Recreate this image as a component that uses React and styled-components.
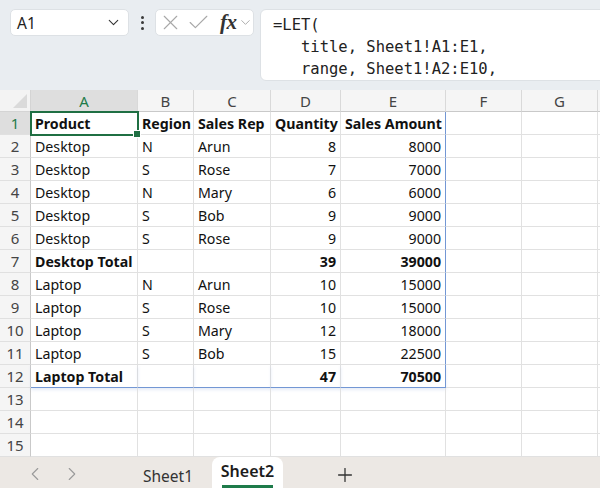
import React from 'react';
import styled, { createGlobalStyle } from 'styled-components';
import { X, Check, ChevronDown, ChevronLeft, ChevronRight, Plus } from 'lucide-react';

const GlobalStyle = createGlobalStyle`
  html, body {
    margin: 0;
    padding: 0;
    background: #ffffff;
    overflow: hidden;
  }
  * { box-sizing: border-box; }
`;

const Page = styled.div`
  width: 600px;
  height: 488px;
  display: flex;
  flex-direction: column;
  font-family: 'Noto Sans', 'Liberation Sans', sans-serif;
  overflow: hidden;
`;

const FormulaArea = styled.div`
  height: 90px;
  background: #e9edf1;
  display: flex;
  align-items: flex-start;
  padding: 9px 0 0 10px;
`;

const NameBox = styled.div`
  width: 119px;
  height: 27px;
  background: #fff;
  border-radius: 5px;
  border: 1px solid #dde1e5;
  display: flex;
  align-items: center;
  justify-content: space-between;
  padding: 0 6px 0 6px;
  font-size: 15.5px;
  color: #222;
`;

const Kebab = styled.div`
  width: 26px;
  height: 27px;
  display: flex;
  flex-direction: column;
  align-items: center;
  justify-content: center;
  gap: 2.5px;
`;

const Dot = styled.span`
  width: 3px;
  height: 3px;
  border-radius: 50%;
  background: #3a3a3a;
`;

const ButtonBox = styled.div`
  width: 99px;
  height: 27px;
  flex-shrink: 0;
  background: #fff;
  border-radius: 5px;
  border: 1px solid #dde1e5;
  display: flex;
  align-items: center;
  padding-left: 2px;
  gap: 3px;
  & > svg { flex-shrink: 0; }
`;

const Fx = styled.span`
  font-family: 'Liberation Serif', 'DejaVu Serif', serif;
  font-style: italic;
  font-weight: bold;
  font-size: 21px;
  line-height: 1;
  color: #333;
  margin-left: 6px;
  letter-spacing: -0.5px;
  display: flex;
  align-items: center;
  gap: 1px;
`;

const FormulaBox = styled.div`
  flex: 1;
  height: 72px;
  margin-left: 6px;
  margin-right: -10px;
  background: #fff;
  border: 1px solid #dde1e5;
  border-radius: 6px;
  padding: 4px 0 0 12px;
  font-family: 'DejaVu Sans Mono', 'Liberation Mono', monospace;
  font-size: 15.5px;
  line-height: 22px;
  color: #222;
  white-space: pre;
`;

const Sheet = styled.div`
  display: grid;
  grid-template-columns: 31px 107px 56px 77px 70px 105px 76px 76px 1fr;
  grid-template-rows: 22px;
  grid-auto-rows: 23px;
  background: #fff;
  font-size: 14.2px;
`;

const Corner = styled.div`
  position: relative;
  background: #f3f3f3;
  border-right: 1px solid #d4d4d4;
  border-bottom: 1px solid #d4d4d4;
  &::after {
    content: '';
    position: absolute;
    right: 3px;
    bottom: 3px;
    width: 14px;
    height: 14px;
    background: #dadada;
    clip-path: polygon(100% 0, 100% 100%, 0 100%);
  }
`;

const ColHead = styled.div`
  background: ${p => (p.$active ? '#dedede' : '#f5f5f5')};
  color: ${p => (p.$active ? '#1e7b4a' : '#444')};
  border-right: 1px solid #d9d9d9;
  border-bottom: 1px solid #c9c9c9;
  display: flex;
  align-items: center;
  justify-content: center;
  font-size: 15px;
`;

const RowHead = styled.div`
  background: ${p => (p.$active ? '#dedede' : '#f5f5f5')};
  color: ${p => (p.$active ? '#1e7b4a' : '#444')};
  border-right: 1px solid #c9c9c9;
  border-bottom: 1px solid #e0e0e0;
  display: flex;
  align-items: center;
  justify-content: center;
  font-size: 15px;
`;

const Cell = styled.div`
  position: relative;
  border-right: 1px solid ${p => (p.$edgeR ? '#7397d4' : '#e1e1e1')};
  border-bottom: 1px solid ${p => (p.$edgeB ? '#7397d4' : '#e1e1e1')};
  display: flex;
  align-items: center;
  justify-content: ${p => (p.$right ? 'flex-end' : 'flex-start')};
  padding: 0 4px 0 4px;
  font-weight: ${p => (p.$bold ? 700 : 400)};
  color: #111;
  white-space: nowrap;
  ${p => p.$edgeB && 'box-shadow: 0 2px 3px rgba(115,151,212,0.18);'}
  ${p =>
    p.$selected &&
    `
    &::before {
      content: '';
      position: absolute;
      left: -1px;
      top: -1px;
      right: -2px;
      bottom: -2px;
      border: 2px solid #1f6f43;
      z-index: 2;
    }
    &::after {
      content: '';
      position: absolute;
      right: -4px;
      bottom: -4px;
      width: 6px;
      height: 6px;
      background: #1f6f43;
      border: 1px solid #fff;
      z-index: 3;
    }
  `}
`;

const TabBar = styled.div`
  flex: 1;
  background: #ece8e4;
  display: flex;
  align-items: stretch;
`;

const Nav = styled.div`
  width: 124px;
  display: flex;
  align-items: center;
  padding-left: 24px;
  padding-top: 2px;
  gap: 15px;
  color: #9a9a9a;
`;

const Tab = styled.div`
  position: relative;
  width: ${p => p.$w}px;
  display: flex;
  align-items: center;
  justify-content: center;
  background: ${p => (p.$active ? '#fff' : 'transparent')};
  border-radius: 8px 8px 0 0;
  font-size: ${p => (p.$active ? '16px' : '15.5px')};
  font-weight: ${p => (p.$active ? 600 : 400)};
  color: ${p => (p.$active ? '#1c1c1c' : '#333')};
  padding-top: ${p => (p.$active ? '0' : '7px')};
  padding-bottom: ${p => (p.$active ? '3px' : '0')};
  ${p =>
    p.$active &&
    `
    &::after {
      content: '';
      position: absolute;
      left: 10px;
      right: 10px;
      bottom: 0;
      height: 3px;
      background: #1e7b4a;
    }
  `}
`;

const AddSheet = styled.div`
  display: flex;
  align-items: center;
  padding-left: 51px;
  padding-top: 4px;
  color: #333;
`;

const cols = ['A', 'B', 'C', 'D', 'E', 'F', 'G', ''];

const data = [
  { cells: ['Product', 'Region', 'Sales Rep', 'Quantity', 'Sales Amount'], bold: true },
  { cells: ['Desktop', 'N', 'Arun', 8, 8000] },
  { cells: ['Desktop', 'S', 'Rose', 7, 7000] },
  { cells: ['Desktop', 'N', 'Mary', 6, 6000] },
  { cells: ['Desktop', 'S', 'Bob', 9, 9000] },
  { cells: ['Desktop', 'S', 'Rose', 9, 9000] },
  { cells: ['Desktop Total', '', '', 39, 39000], bold: true },
  { cells: ['Laptop', 'N', 'Arun', 10, 15000] },
  { cells: ['Laptop', 'S', 'Rose', 10, 15000] },
  { cells: ['Laptop', 'S', 'Mary', 12, 18000] },
  { cells: ['Laptop', 'S', 'Bob', 15, 22500] },
  { cells: ['Laptop Total', '', '', 47, 70500], bold: true },
];

const formula = `=LET(
   title, Sheet1!A1:E1,
   range, Sheet1!A2:E10,`;

export default function App() {
  const rows = [];
  for (let r = 0; r < 15; r++) {
    const row = data[r];
    rows.push(
      <RowHead key={`h${r}`} $active={r === 0}>
        {r + 1}
      </RowHead>
    );
    for (let c = 0; c < 8; c++) {
      const value = row && c < 5 ? row.cells[c] : '';
      const inTable = row && c < 5;
      rows.push(
        <Cell
          key={`${r}-${c}`}
          $bold={row && row.bold && c < 5}
          $right={typeof value === 'number'}
          $edgeR={inTable && c === 4}
          $edgeB={r === 11 && c < 5}
          $selected={r === 0 && c === 0}
        >
          {value}
        </Cell>
      );
    }
  }

  return (
    <Page>
      <GlobalStyle />
      <FormulaArea>
        <NameBox>
          A1
          <ChevronDown size={17} strokeWidth={1.5} color="#333" />
        </NameBox>
        <Kebab>
          <Dot />
          <Dot />
          <Dot />
        </Kebab>
        <ButtonBox>
          <X size={25} strokeWidth={1.1} color="#a8a8a8" />
          <Check size={25} strokeWidth={1.1} color="#a8a8a8" />
          <Fx>
            fx
            <ChevronDown size={15} strokeWidth={1.3} color="#9a9a9a" />
          </Fx>
        </ButtonBox>
        <FormulaBox>{formula}</FormulaBox>
      </FormulaArea>

      <Sheet>
        <Corner />
        {cols.map((c, i) => (
          <ColHead key={i} $active={i === 0}>
            {c}
          </ColHead>
        ))}
        {rows}
      </Sheet>

      <TabBar>
        <Nav>
          <ChevronLeft size={22} strokeWidth={1.2} />
          <ChevronRight size={22} strokeWidth={1.2} />
        </Nav>
        <Tab $w={88}>Sheet1</Tab>
        <Tab $w={71} $active>
          Sheet2
        </Tab>
        <AddSheet>
          <Plus size={22} strokeWidth={1.4} />
        </AddSheet>
      </TabBar>
    </Page>
  );
}
